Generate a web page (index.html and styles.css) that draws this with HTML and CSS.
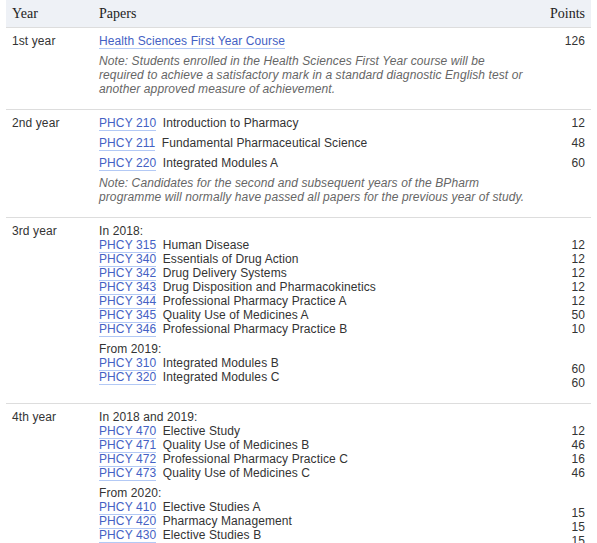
FILE: index.html
```html
<!DOCTYPE html>
<html lang="en">
<head>
<meta charset="utf-8">
<title>BPharm papers</title>
<link rel="stylesheet" href="styles.css">
</head>
<body>
<table class="curriculum">
  <colgroup>
    <col class="c-year">
    <col class="c-papers">
    <col class="c-points">
  </colgroup>
  <thead>
    <tr>
      <th class="h-year">Year</th>
      <th class="h-papers">Papers</th>
      <th class="h-points">Points</th>
    </tr>
  </thead>
  <tbody>
    <tr>
      <td class="year">1st year</td>
      <td class="papers spaced">
        <div class="paper"><a class="code" href="#">Health Sciences First Year Course</a></div>
        <p class="note">Note: Students enrolled in the Health Sciences First Year course will be required to achieve a satisfactory mark in a standard diagnostic English test or another approved measure of achievement.</p>
      </td>
      <td class="points spaced">
        <div class="pt">126</div>
      </td>
    </tr>
    <tr>
      <td class="year">2nd year</td>
      <td class="papers spaced">
        <div class="paper"><a class="code" href="#">PHCY 210</a> Introduction to Pharmacy</div>
        <div class="paper"><a class="code" href="#">PHCY 211</a> Fundamental Pharmaceutical Science</div>
        <div class="paper"><a class="code" href="#">PHCY 220</a> Integrated Modules A</div>
        <p class="note">Note: Candidates for the second and subsequent years of the BPharm programme will normally have passed all papers for the previous year of study.</p>
      </td>
      <td class="points spaced">
        <div class="pt">12</div>
        <div class="pt">48</div>
        <div class="pt">60</div>
      </td>
    </tr>
    <tr>
      <td class="year">3rd year</td>
      <td class="papers">
        <div class="group">
          <div class="group-label">In 2018:</div>
          <div class="paper"><a class="code" href="#">PHCY 315</a> Human Disease</div>
          <div class="paper"><a class="code" href="#">PHCY 340</a> Essentials of Drug Action</div>
          <div class="paper"><a class="code" href="#">PHCY 342</a> Drug Delivery Systems</div>
          <div class="paper"><a class="code" href="#">PHCY 343</a> Drug Disposition and Pharmacokinetics</div>
          <div class="paper"><a class="code" href="#">PHCY 344</a> Professional Pharmacy Practice A</div>
          <div class="paper"><a class="code" href="#">PHCY 345</a> Quality Use of Medicines A</div>
          <div class="paper"><a class="code" href="#">PHCY 346</a> Professional Pharmacy Practice B</div>
        </div>
        <div class="group">
          <div class="group-label">From 2019:</div>
          <div class="paper"><a class="code" href="#">PHCY 310</a> Integrated Modules B</div>
          <div class="paper"><a class="code" href="#">PHCY 320</a> Integrated Modules C</div>
        </div>
      </td>
      <td class="points">
        <div class="pt-group">
          <div class="pt">&nbsp;</div>
          <div class="pt">12</div>
          <div class="pt">12</div>
          <div class="pt">12</div>
          <div class="pt">12</div>
          <div class="pt">12</div>
          <div class="pt">50</div>
          <div class="pt">10</div>
        </div>
        <div class="pt-group">
          <div class="pt">60</div>
          <div class="pt">60</div>
        </div>
      </td>
    </tr>
    <tr>
      <td class="year">4th year</td>
      <td class="papers">
        <div class="group">
          <div class="group-label">In 2018 and 2019:</div>
          <div class="paper"><a class="code" href="#">PHCY 470</a> Elective Study</div>
          <div class="paper"><a class="code" href="#">PHCY 471</a> Quality Use of Medicines B</div>
          <div class="paper"><a class="code" href="#">PHCY 472</a> Professional Pharmacy Practice C</div>
          <div class="paper"><a class="code" href="#">PHCY 473</a> Quality Use of Medicines C</div>
        </div>
        <div class="group">
          <div class="group-label">From 2020:</div>
          <div class="paper"><a class="code" href="#">PHCY 410</a> Elective Studies A</div>
          <div class="paper"><a class="code" href="#">PHCY 420</a> Pharmacy Management</div>
          <div class="paper"><a class="code" href="#">PHCY 430</a> Elective Studies B</div>
        </div>
      </td>
      <td class="points">
        <div class="pt-group">
          <div class="pt">&nbsp;</div>
          <div class="pt">12</div>
          <div class="pt">46</div>
          <div class="pt">16</div>
          <div class="pt">46</div>
        </div>
        <div class="pt-group">
          <div class="pt">15</div>
          <div class="pt">15</div>
          <div class="pt">15</div>
        </div>
      </td>
    </tr>
  </tbody>
</table>
</body>
</html>
```

FILE: styles.css
```css
html, body {
  margin: 0;
  padding: 0;
  background: #ffffff;
}

body {
  font-family: "Liberation Sans", Arial, sans-serif;
  font-size: 12px;
  line-height: 14px;
  letter-spacing: 0.1px;
  color: #333333;
}

.curriculum {
  table-layout: fixed;
  width: 585px;
  margin: 0 6px;
  border-collapse: separate;
  border-spacing: 0;
}

.c-year { width: 93px; }
.c-papers { width: 434px; }
.c-points { width: 58px; }

.curriculum th {
  height: 28px;
  padding: 1px 6px 0 6px;
  box-sizing: border-box;
  background: #eef1f6;
  border-bottom: 1px solid #dddddd;
  font-family: "Liberation Serif", "Times New Roman", serif;
  font-size: 14px;
  font-weight: normal;
  line-height: 16px;
  letter-spacing: 0;
  color: #222222;
  text-align: left;
  vertical-align: middle;
}

.curriculum th.h-papers {
  padding-left: 0;
}

.curriculum th.h-points {
  text-align: right;
}

.curriculum td {
  vertical-align: top;
  padding: 6px 0 13px 0;
  border-bottom: 1px solid #dddddd;
}

.curriculum td.year {
  padding-left: 6px;
}

.curriculum td.papers {
  padding-right: 6px;
}

.curriculum td.points {
  padding-right: 6px;
  text-align: right;
}

.code {
  color: #4461c4;
  text-decoration: none;
  border-bottom: 1px solid #b3c9f5;
  margin-right: 3px;
}

.spaced .paper + .paper,
.spaced .pt + .pt {
  margin-top: 6px;
}

.note {
  margin: 6px 0 0 0;
  font-style: italic;
  color: #666666;
}

.group + .group {
  margin-top: 6px;
}

.pt-group + .pt-group {
  margin-top: 26px;
}
```
